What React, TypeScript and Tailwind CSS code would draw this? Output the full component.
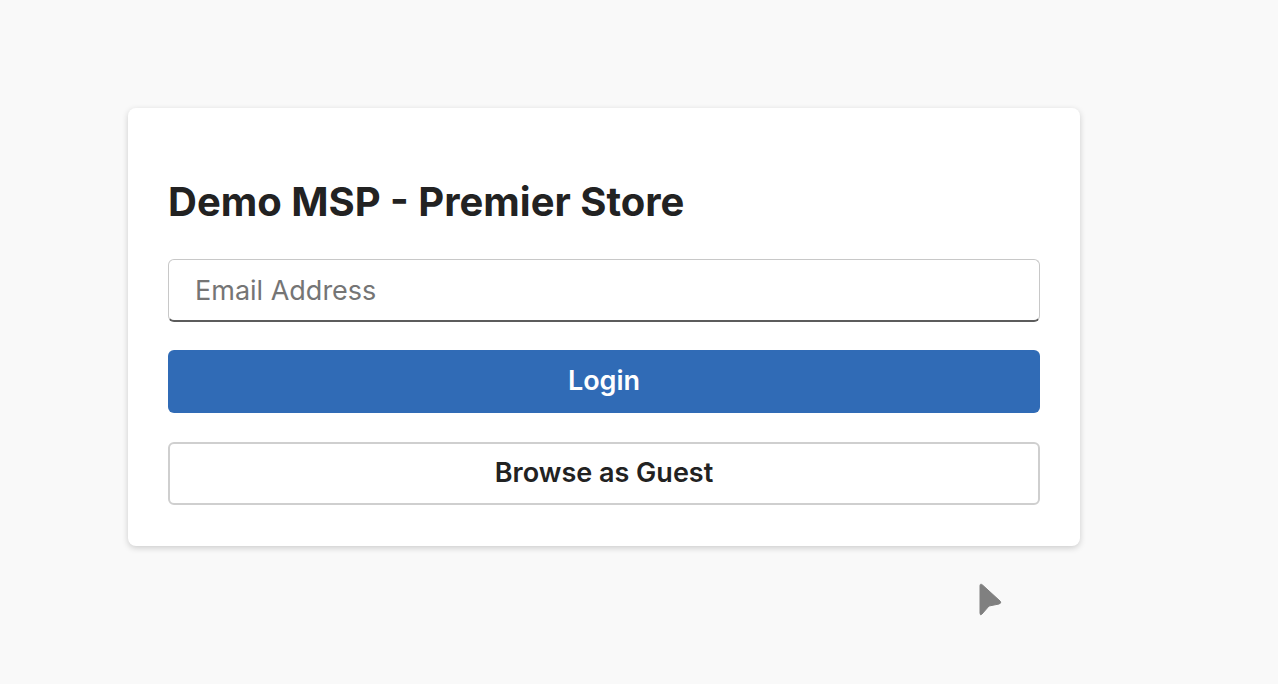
export default function App() {
  return (
    <div
      className="relative min-h-[684px] w-full bg-[#f9f9f9] text-[#222222]"
      style={{ fontFamily: "Inter, 'Noto Sans', sans-serif" }}
    >
      <div className="pl-[128px] pt-[108px]">
        <div className="flex w-[952px] flex-col rounded-lg bg-white px-10 pb-[41px] pt-[70px] shadow-[0_2px_6px_rgba(0,0,0,0.18)]">
          <h1 className="text-[40px] font-bold leading-[48px] text-[#222222]">
            Demo MSP - Premier Store
          </h1>
          <input
            type="email"
            placeholder="Email Address"
            className="mt-[33px] h-[63px] w-full rounded-md border border-[#c8c8c8] border-b-2 border-b-[#5c5c5c] px-[26px] text-[27px] text-[#222222] placeholder:text-[#757575] outline-none"
          />
          <button className="mt-[28px] h-[63px] w-full rounded-md bg-[#306bb6] text-[27px] font-semibold text-white">
            Login
          </button>
          <button className="mt-[29px] h-[63px] w-full rounded-md border-2 border-[#cfcfcf] bg-white text-[27px] font-semibold text-[#222222]">
            Browse as Guest
          </button>
        </div>
      </div>
      <svg
        className="absolute left-[977px] top-[582px]"
        width="28"
        height="34"
        viewBox="0 0 28 34"
      >
        <path
          d="M3 4 Q3 1 5.5 3 L23 19 Q25 21 22 22 L12 24 L5 32 Q3 34 3 31 Z"
          fill="#808080"
          stroke="#808080"
          strokeWidth="1"
          strokeLinejoin="round"
        />
      </svg>
    </div>
  );
}
